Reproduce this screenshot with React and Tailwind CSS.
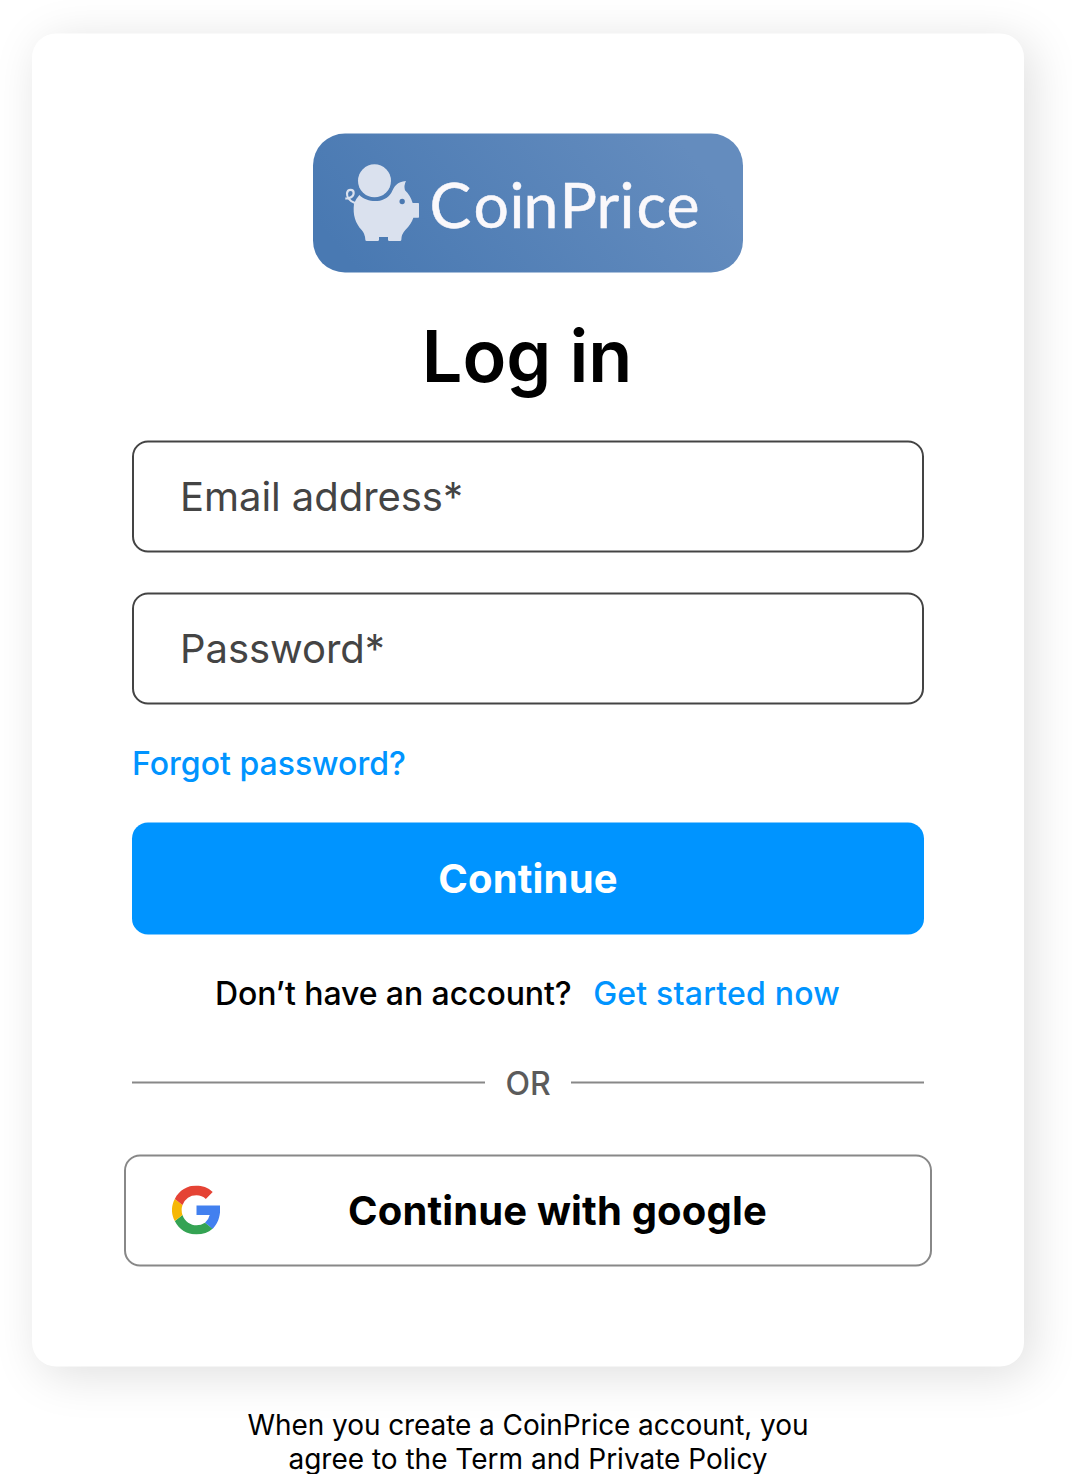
function Pig() {
  return (
    <g transform="translate(22 21.5) scale(.33333)" fill="#dae1ee">
      <circle cx="118.500" cy="77.500" r="49.500" />
      <path d="M73 120C100 146 150 145 169 113C178 94 186 80 213 78Q206 91 210 106Q226 121 233 144H250Q252 144 252 146V186Q252 188 250 188H235Q229 207 211 225Q199 238 199 254Q199 258 195 258H163Q159 258 159 254V246H132V254Q132 258 128 258H95Q91 258 91 254Q90 236 80 225C61 204 53 180 57 146Q62 132 73 120Z" />
      <path d="M60 144C44 138 35 126 36 115C38 101 56 102 56 114C56 125 43 132 31 130" fill="none" stroke="#dae1ee" strokeWidth="6.500" />
      <circle cx="201.500" cy="139.500" r="8" fill="#4b79b1" />
    </g>
  );
}

function Logo() {
  return (
    <svg width="430" height="139" viewBox="0 0 430 139" role="img" aria-label="CoinPrice" className="overflow-visible">
      <defs>
        <linearGradient id="plate" gradientUnits="userSpaceOnUse" x1="70" y1="170" x2="330" y2="-40">
          <stop stopColor="#4979b2" />
          <stop offset="1" stopColor="#648cbe" />
        </linearGradient>
      </defs>
      <rect width="430" height="139" rx="32" fill="url(#plate)" />
      <Pig />
      <text y="94" x="116.500 160.500 196.500 210.500 246.500 283.500 306.500 323.500 353.500" fontFamily="Lato, sans-serif" fontSize="62.500" fill="#faf8fb" stroke="#faf8fb" strokeWidth=".5">CoinPrice</text>
    </svg>
  );
}

function GoogleIcon() {
  return (
    <svg className="-mt-px h-[49px] w-12" viewBox="0 0 48 49">
      <path fill="#4280ef" d="M48 20.100H24.500V29.500H37.700Q36.500 34.600 33 37.300L40.500 43.500C45.500 38.800 49 30.500 48 20.100Z" />
      <path fill="#34a353" d="M24.500 49C31 49 36.500 47.200 40.500 43.300L33 37.300C25 42.500 14 39.500 10.500 29.500L2.800 35.500C7 44 15 49 24.500 49Z" />
      <path fill="#f6b704" d="M10.500 29.500Q8.800 24.500 10.500 19.500L2.800 13.400C-1 20.500-1 28.500 2.800 35.500Z" />
      <path fill="#e54335" d="M24.500 9.700Q30 9.700 33.800 13.400L40.700 6.500C29-4.500 9.800-1 2.800 13.400L10.500 19.500Q14.500 9.700 24.500 9.700Z" />
    </svg>
  );
}

export default function App() {
  return (
    <div className="h-[1474px] overflow-hidden bg-white font-['Inter',sans-serif] text-black">
      <div className="[transform:translateY(0.5px)] px-8 pt-[33px]">
        <main className="flex h-[1333px] w-[992px] flex-col items-center rounded-3xl bg-white pt-[100px] shadow-[8px_8px_48px_rgba(0,0,0,0.13)]">
          <Logo />
          <h1 className="mt-[39px] mr-0.5 text-[72px] leading-[88px] font-semibold">Log in</h1>
          <form className="mt-[41px] flex w-[792px] flex-col">
            <div className="flex h-28 items-center rounded-2xl border-2 border-[#444] px-[46px] text-[40px] tracking-[-0.05px] text-[#444]">Email address*</div>
            <div className="mt-10 flex h-28 items-center rounded-2xl border-2 border-[#444] px-[46px] text-[40px] tracking-[-0.05px] text-[#444]">Password*</div>
            <a className="mt-10 text-[32px] leading-[38px] font-medium text-[#0094ff]">Forgot password?</a>
            <button type="button" className="mt-10 h-28 rounded-2xl bg-[#0094ff] text-[40px] font-bold tracking-[0.15px] text-white">Continue</button>
          </form>
          <p className="mt-10 mr-px flex gap-[21.5px] text-[32px] leading-[38px] font-medium">
            <span className="tracking-[-0.08px]">Don’t have an account?</span>
            <a className="tracking-[0.2px] text-[#0094ff]">Get started now</a>
          </p>
          <div className="mt-[51px] flex w-[792px] items-center gap-5 text-[32px] leading-[40px] text-[#5b5b5b]">
            <span className="h-0.5 flex-1 bg-[#888]" />
            <span className="-mb-0.5 font-medium">OR</span>
            <span className="h-0.5 flex-1 bg-[#888]" />
          </div>
          <button type="button" className="mt-[53px] flex h-28 w-[808px] items-center rounded-2xl border-2 border-[#888] pl-[46px] text-[40px] font-bold">
            <GoogleIcon />
            <span className="ml-32 tracking-[0.15px]">Continue with google</span>
          </button>
        </main>
        <footer className="mt-[42px] w-[992px] text-center text-[28px] leading-[33.5px]">
          <span className="tracking-[-0.08px]">When you create a CoinPrice account, you</span>
          <br />
          agree to the Term and Private Policy
        </footer>
      </div>
    </div>
  );
}
